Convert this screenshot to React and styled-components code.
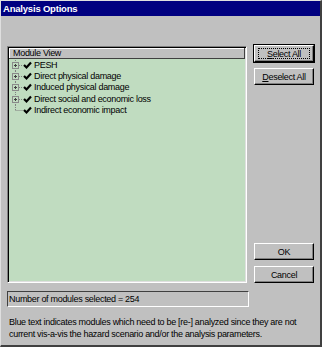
import React from "react";
import styled, { createGlobalStyle } from "styled-components";

const Global = createGlobalStyle`
  html, body { margin: 0; padding: 0; background: #c0c0c0; }
  * { box-sizing: border-box; }
`;

const modules = [
  { name: "PESH", last: false },
  { name: "Direct physical damage", last: false },
  { name: "Induced physical damage", last: false },
  { name: "Direct social and economic loss", last: false },
  { name: "Indirect economic impact", last: true },
];

function TreeGlyph({ last }) {
  return (
    <svg width="12" height="11" viewBox="0 0 12 11">
      {last ? (
        <>
          <line x1="4.5" y1="0" x2="4.5" y2="5.5" stroke="#808080" strokeDasharray="1 1" />
          <line x1="4.5" y1="5.5" x2="12" y2="5.5" stroke="#808080" strokeDasharray="1 1" />
        </>
      ) : (
        <>
          <line x1="4.5" y1="0" x2="4.5" y2="11" stroke="#808080" strokeDasharray="1 1" />
          <line x1="8" y1="5.5" x2="12" y2="5.5" stroke="#808080" strokeDasharray="1 1" />
          <rect x="1.5" y="2.5" width="6" height="6" fill="#c0dcc0" stroke="#8a8a8a" />
          <line x1="3" y1="5.5" x2="6" y2="5.5" stroke="#404040" />
          <line x1="4.5" y1="4" x2="4.5" y2="7" stroke="#404040" />
        </>
      )}
    </svg>
  );
}

function Check() {
  return (
    <svg width="9" height="9" viewBox="0 0 9 9">
      <path d="M1 4 L3.5 6.5 L8 1.5" fill="none" stroke="#000" strokeWidth="2.2" />
    </svg>
  );
}

export default function App() {
  return (
    <>
      <Global />
      <Window>
        <TitleBar>Analysis Options</TitleBar>
        <Body>
          <Main>
            <Panel>
              <Header>Module View</Header>
              <Tree>
                {modules.map((m) => (
                  <Row key={m.name}>
                    <TreeGlyph last={m.last} />
                    <Check />
                    <Label>{m.name}</Label>
                  </Row>
                ))}
              </Tree>
            </Panel>
            <Buttons>
              <Group>
                <Button $default>
                  <Focus><span><u>S</u>elect All</span></Focus>
                </Button>
                <Button><u>D</u>eselect All</Button>
              </Group>
              <Group>
                <Button>OK</Button>
                <Button>Cancel</Button>
              </Group>
            </Buttons>
          </Main>
          <Status>Number of modules selected = 254</Status>
          <Note>
            Blue text indicates modules which need to be [re-] analyzed since they are not
            current vis-a-vis the hazard scenario and/or the analysis parameters.
          </Note>
        </Body>
      </Window>
    </>
  );
}

const Window = styled.div`
  width: 322px;
  height: 347px;
  display: flex;
  flex-direction: column;
  background: #c0c0c0;
  border-top: 1px solid #dfdfdf;
  border-left: 1px solid #dfdfdf;
  border-right: 2px solid #404040;
  border-bottom: 2px solid #404040;
  font-family: "Liberation Sans", Arial, sans-serif;
  font-size: 9px;
  letter-spacing: -0.3px;
  color: #000;
`;

const TitleBar = styled.div`
  height: 15px;
  background: #000080;
  color: #fff;
  font-weight: bold;
  font-size: 9.5px;
  letter-spacing: -0.2px;
  line-height: 15px;
  padding-left: 2px;
`;

const Body = styled.div`
  padding: 30px 0 0 6px;
  display: flex;
  flex-direction: column;
`;

const Main = styled.div`
  display: flex;
  gap: 7px;
`;

const Panel = styled.div`
  width: 240px;
  height: 237px;
  background: #c0dcc0;
  border-top: 1px solid #808080;
  border-left: 1px solid #808080;
  border-right: 1px solid #fff;
  border-bottom: 1px solid #fff;
  box-shadow: inset 1px 1px 0 #000, inset -1px -1px 0 #dfdfdf;
  padding: 1px;
  display: flex;
  flex-direction: column;
`;

const Header = styled.div`
  height: 11px;
  line-height: 10px;
  background: #c0c0c0;
  border-right: 1px solid #404040;
  border-bottom: 1px solid #404040;
  box-shadow: inset 1px 1px 0 #fff;
  padding-left: 4px;
`;

const Tree = styled.div`
  display: flex;
  flex-direction: column;
  padding: 1px 0 0 2px;
`;

const Row = styled.div`
  height: 11.2px;
  display: flex;
  align-items: center;
`;

const Label = styled.span`
  margin-left: 2px;
  line-height: 11px;
`;

const Buttons = styled.div`
  width: 60px;
  height: 238px;
  margin-top: -1px;
  display: flex;
  flex-direction: column;
  justify-content: space-between;
`;

const Group = styled.div`
  display: flex;
  flex-direction: column;
  gap: 6px;
`;

const Button = styled.div`
  height: 17px;
  display: flex;
  align-items: center;
  justify-content: center;
  padding: ${(p) => (p.$default ? "2px 3px" : "0")};
  background: #c0c0c0;
  border-top: 1px solid #fff;
  border-left: 1px solid #fff;
  border-right: 1px solid #000;
  border-bottom: 1px solid #000;
  box-shadow: inset -1px -1px 0 #808080;
  outline: ${(p) => (p.$default ? "1px solid #000" : "none")};
  u { text-decoration: underline; }
`;

const Focus = styled.span`
  flex: 1;
  align-self: stretch;
  display: flex;
  align-items: center;
  justify-content: center;
  border: 1px dotted #000;
`;

const Status = styled.div`
  width: 242px;
  height: 16px;
  margin-top: 8px;
  border-top: 1px solid #404040;
  border-left: 1px solid #404040;
  border-right: 1px solid #fff;
  border-bottom: 1px solid #fff;
  line-height: 14px;
  padding-left: 1px;
`;

const Note = styled.div`
  margin-top: 9px;
  padding-left: 2px;
  line-height: 12px;
`;
